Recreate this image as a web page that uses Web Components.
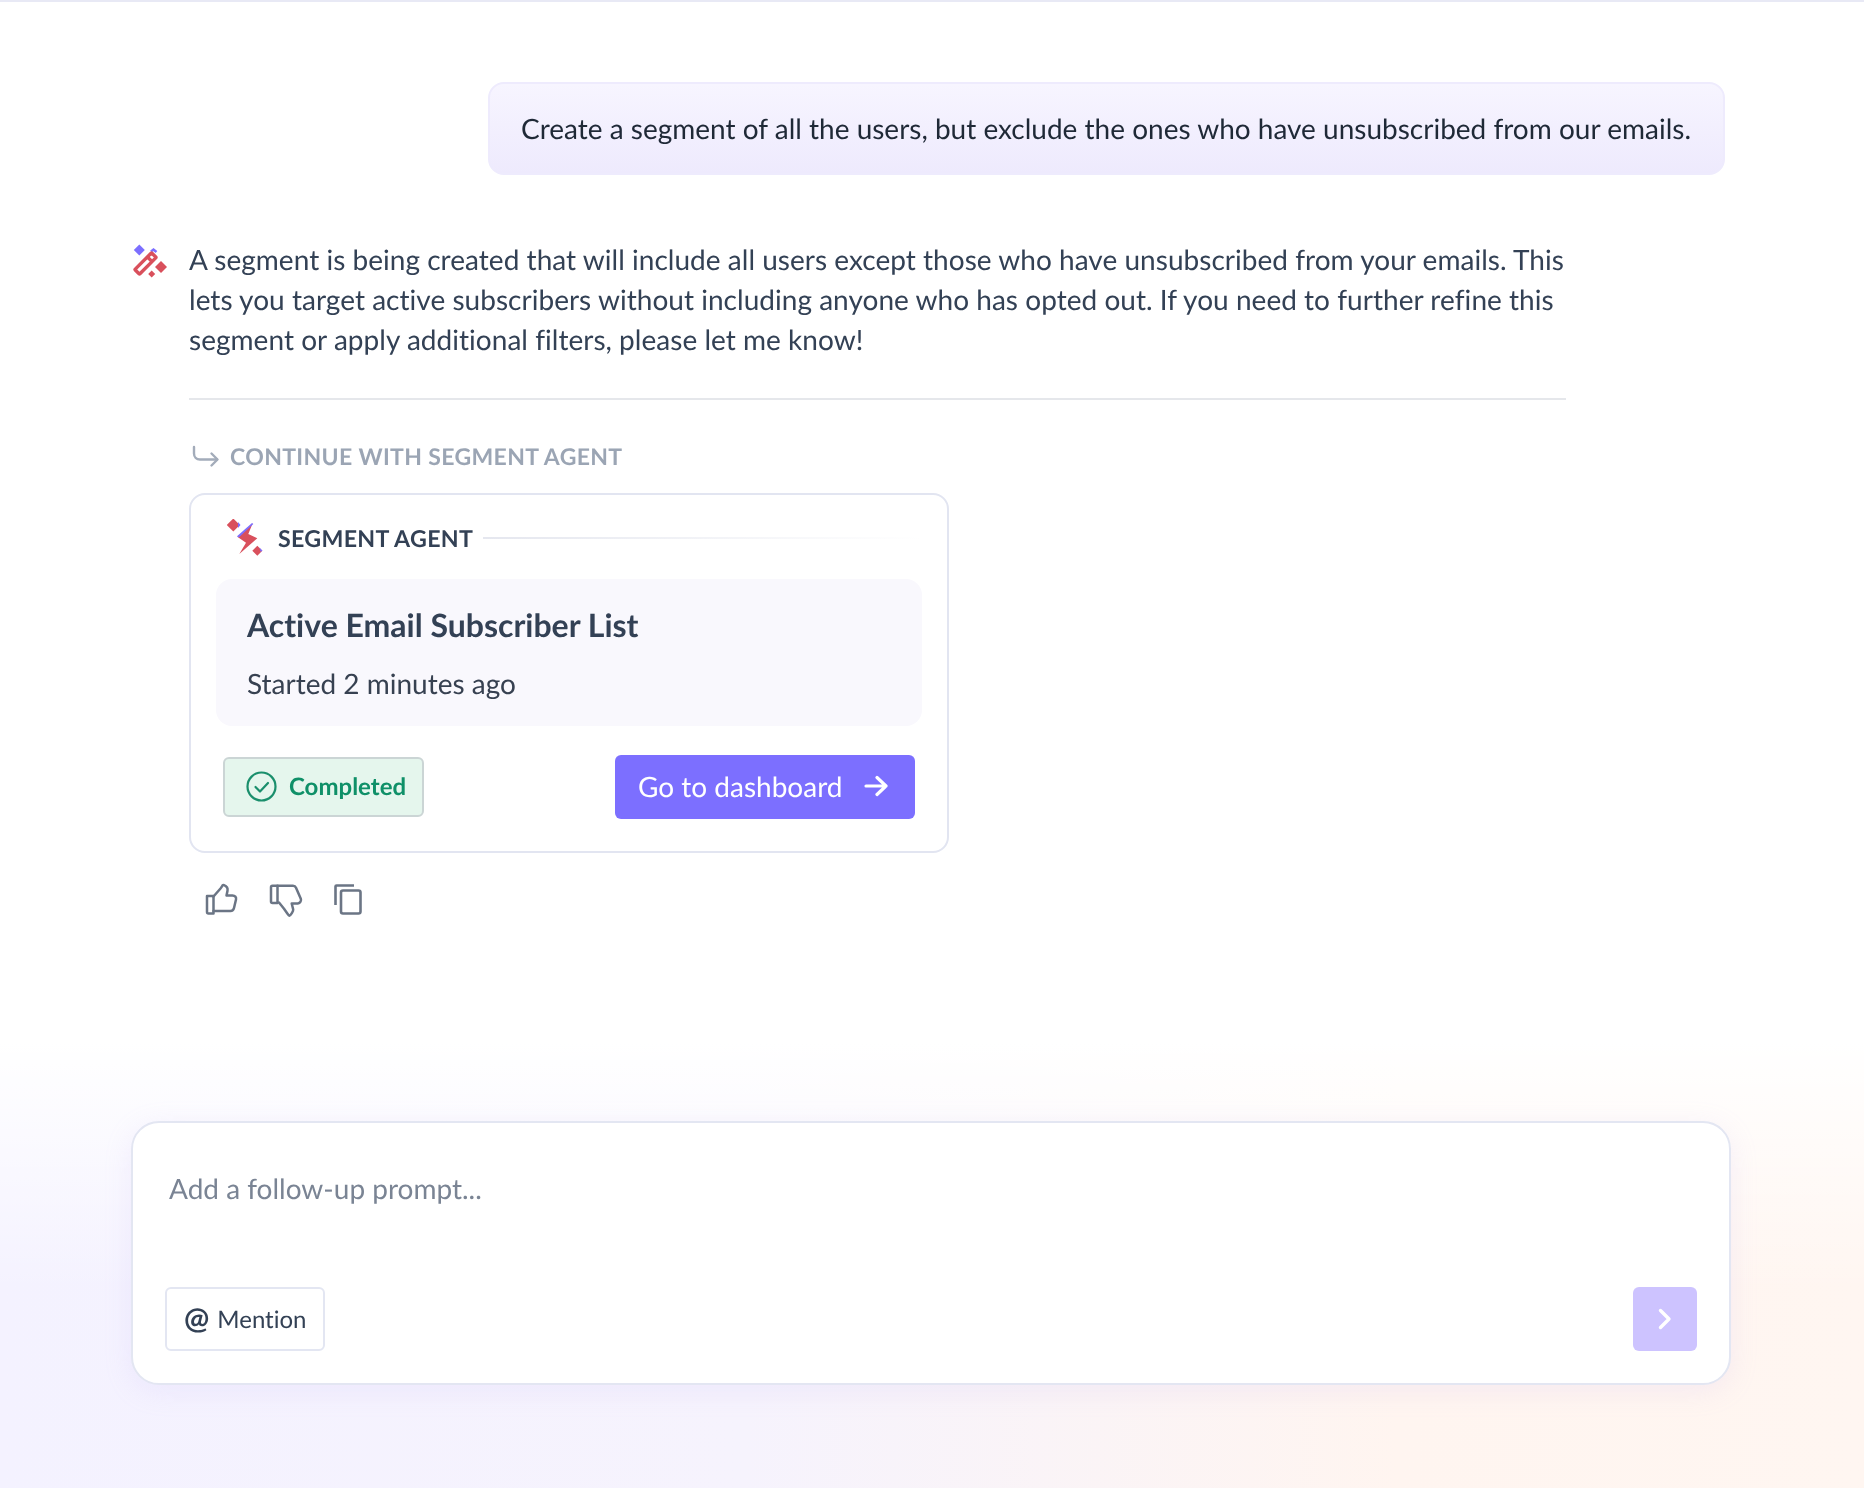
<!DOCTYPE html>
<html lang="en"><head><meta charset="utf-8"><title>Chat</title>
<style>html,body{margin:0;padding:0}body{font-family:Lato,sans-serif;background:#fff;text-rendering:geometricPrecision;font-variant-ligatures:none}.lig{font-variant-ligatures:normal}</style></head>
<body>
<chat-app>
  <user-bubble>Create a segment of all the users, but exclude the ones who have unsubscribed from our emails.</user-bubble>
  <assistant-msg>A segment is being created that will include all users except those who have unsubscribed from your emails. This<br>lets you target active subscribers without including anyone who has opted out. If you need to further re<span class="lig">fi</span>ne this<br>segment or apply additional <span class="lig">fi</span>lters, please let me know!
    <agent-card slot="extra" title-text="Active Email Subscriber List" sub="Started 2 minutes ago"></agent-card>
  </assistant-msg>
  <chat-composer slot="composer"></chat-composer>
</chat-app>
<script>
function def(name, html, init){
  customElements.define(name, class extends HTMLElement{
    constructor(){super();this.attachShadow({mode:'open'}).innerHTML=html;}
    connectedCallback(){ if(init) init.call(this); }
  });
}
def('chat-app',`<style>
:host{display:flex;flex-direction:column;box-sizing:border-box;width:1864px;height:1488px;overflow:hidden;
 border-top:2px solid #e8e9f5;
 background:linear-gradient(to bottom,#fff 0,#fff 1040px,rgba(255,255,255,0) 1290px),linear-gradient(to right,#f4f2ff 0,#f6f3fd 40%,#fff5f0 75%,#fff6f1 100%);
 font-family:Lato,sans-serif}
.main{flex:1;display:flex;flex-direction:column;padding:80px 134px 0 132px;will-change:transform}
.foot{padding:0 133px 103px 131px;will-change:transform}
</style><div class="main"><slot></slot></div><div class="foot"><slot name="composer"></slot></div>`);
def('user-bubble',`<style>
:host{display:block;align-self:flex-end;margin-right:5px;box-sizing:border-box;padding:24px 32px 26px 31px;height:93px;border:2px solid #eeebfd;border-radius:16px;
 background:linear-gradient(to bottom,#f7f5ff,#eeeafd);color:#1f2937;font-size:28px;line-height:40px;white-space:nowrap}
</style><slot></slot>`);
def('assistant-msg',`<style>
:host{display:grid;grid-template-columns:57px 1377px;margin-top:64px;color:#334155}
.ic{padding-top:5px}
svg{display:block}
.t{font-size:28px;line-height:40px;color:#334155;letter-spacing:.03px;white-space:nowrap}
hr{border:0;height:2px;background:#e5e7eb;margin:39px 0 0}
.cont{display:flex;align-items:center;gap:10px;margin-top:36px;height:40px;padding-left:3px;color:#9ba5b4;font-size:23px;font-weight:700;letter-spacing:.35px}
.cards{margin-top:17px}
.acts{display:flex;gap:30px;margin-top:30px;padding-left:16px}
</style>
<div class="ic"><svg width="36" height="36" viewBox="0 0 36 36">
<path d="M7.300 0.500l5.500 5.500-5.500 5.500-5.500-5.500z" fill="#7c6fff"/>
<path d="M19 7.500l2.500-2 3 2.500" fill="none" stroke="#7c6fff" stroke-width="2.500"/>
<g transform="translate(13.500 19.500) rotate(-45)" fill="none" stroke="#d9505c" stroke-width="3.400" stroke-linejoin="round"><rect x="-11.800" y="-3.300" width="23.600" height="6.600" rx=".6"/><path d="M6 -3.300v6.600"/></g>
<path d="M29 17l6 6-6 6-6-6z" fill="#d9505c"/><path d="M19.700 26.500l3.500 3.500-3.500 3.500-3.500-3.500z" fill="#d9505c"/></svg></div>
<div><div class="t"><slot></slot></div><hr>
<div class="cont"><svg width="28" height="24" viewBox="0 0 28 24" fill="none" stroke="#a3acba" stroke-width="2.400" stroke-linecap="round" stroke-linejoin="round"><path d="M2 3v6.500c0 3.500 2.500 6 6 6h17"/><path d="M19.500 9.500l6 6-6 6"/></svg><span>CONTINUE WITH SEGMENT AGENT</span></div>
<div class="cards"><slot name="extra"></slot></div>
<div class="acts">
<svg width="34" height="34" viewBox="0 0 34 34" fill="none" stroke="#6b7585" stroke-width="2.500" stroke-linejoin="round" stroke-linecap="round"><path d="M2 13h6.500v17.500H3.500A1.500 1.500 0 0 1 2 29z"/><path d="M8.500 13.500l7-8c.8-1 1.500-2 2-3 .5-.5 1-.5 1.500-.3 2.500 1 4 3 3.500 5.500l-1 4.800h6c2.500 0 4 1.800 3.500 4l-2 8.500c-.5 2-1.800 3-3.500 3H8.500"/></svg>
<svg width="34" height="34" viewBox="0 0 34 34" fill="none" stroke="#6b7585" stroke-width="2.500" stroke-linejoin="round" stroke-linecap="round"><path d="M2 4.200a1.500 1.500 0 0 1 1.500-1.500H8.500V20H3.500A1.500 1.500 0 0 1 2 18.500z"/><path d="M8.500 2.700H24c1.500 0 2.500.8 3 2l4.800 11c.8 2-.5 4.500-3 4.800H22.700l1.500 6c.2 1.500-2.500 6-3.900 6.200-.8 0-1.200-1-1.800-2l-3.500-5-5-6.200"/></svg>
<svg width="30" height="34" viewBox="0 0 30 34" fill="none" stroke="#6b7585" stroke-width="2.600" stroke-linejoin="round"><path d="M2.500 22V3.500a1 1 0 0 1 1-1H21"/><rect x="8" y="7.500" width="19.500" height="23" rx="2"/></svg>
</div></div>`);
def('agent-card',`<style>
:host{display:block;box-sizing:border-box;width:760px;height:360px;border:2px solid #e2e5f1;border-radius:16px;background:#fff;padding:0 25px 0 25px;color:#334155}
.h{display:flex;align-items:center;height:84px;margin-left:11px;gap:15px;box-sizing:border-box;padding-top:2px}
.h b{font-size:23.200px;font-weight:700;letter-spacing:.3px;white-space:nowrap;color:#334155}
.ln{height:2px;flex:1;margin-left:-5px;background:linear-gradient(to right,#e5e7ef,rgba(229,231,239,0))}
.p{height:147px;box-sizing:border-box;background:#f9f8fd;border-radius:16px;padding:24px 31px}
.p h3{margin:0;font-size:32px;line-height:44px;font-weight:700;color:#334155}
.p div{font-size:28px;line-height:40px;margin-top:16px;color:#374151}
.r{display:flex;align-items:center;justify-content:space-between;margin:29px 7px 0 7px}
.btn{display:flex;align-items:center;gap:22px;box-sizing:border-box;width:300px;height:64px;padding:0 24px 2px 23px;background:#7c6fff;border-radius:6px;color:#fff;font-size:28px}
</style>
<div class="h"><svg width="36" height="38" viewBox="0 0 36 38"><path d="M6.300 -.5L12.800 6l-6.500 6.500L-.2 6z" fill="#d9505c"/><path d="M11 3l2.500 3-2.500 3z" fill="#7c6fff"/><path d="M25.700 4.300L10.300 17.700 19 23.700 12.300 35 30.300 19.300 21.300 15z" fill="#d9505c"/><path d="M10 17.300L25 4l1.300 1L11.800 18.400z" fill="#7c6fff"/><path d="M30.300 26.700l5 5-5 5-5-5z" fill="#d9505c"/><path d="M32.500 28.500l3 3.200-2 1z" fill="#7c6fff"/></svg><b>SEGMENT AGENT</b><div class="ln"></div></div>
<div class="p"><h3 id="t"></h3><div id="s"></div></div>
<div class="r"><status-badge>Completed</status-badge><div class="btn"><span>Go to dashboard</span><svg width="24" height="22" viewBox="0 0 24 22" fill="none" stroke="#fff" stroke-width="3.200" stroke-linecap="round" stroke-linejoin="round"><path d="M2 11h20M13 2.500l9 8.500-9 8.500"/></svg></div></div>`,
function(){this.shadowRoot.getElementById('t').textContent=this.getAttribute('title-text');this.shadowRoot.getElementById('s').textContent=this.getAttribute('sub');});
def('status-badge',`<style>
:host{display:flex;align-items:center;gap:12px;box-sizing:border-box;width:201px;height:60px;padding:0 0 2px 21px;background:#e5f6ed;border:2px solid #cbd5d5;border-radius:6px;color:#0f9068;font-size:24px;font-weight:700}
</style><svg width="31" height="31" viewBox="0 0 31 31" fill="none" stroke="#1a8f6c" stroke-width="2.200" stroke-linecap="round" stroke-linejoin="round"><circle cx="15.500" cy="15.500" r="14"/><path d="M9.500 16l4.500 4.500 8-8.500"/></svg><slot></slot>`);
def('chat-composer',`<style>
:host{display:flex;flex-direction:column;justify-content:space-between;box-sizing:border-box;height:264px;border:2px solid #e3e6f2;border-radius:28px;background:#fff;padding:46px 32px 32px 36px;box-shadow:0 6px 28px rgba(190,175,245,.16);color:#334155}
.ph{font-size:28px;line-height:38px;color:#7a8494}
.r{display:flex;justify-content:space-between;margin-left:-4px}
.m{display:flex;align-items:center;gap:8px;box-sizing:border-box;width:160px;height:64px;padding-left:17px;border:2px solid #e3e6f2;border-radius:6px;font-size:24px;background:#fff}
.m i{font-style:normal;font-size:30px;font-weight:700;line-height:1;position:relative;top:-1px}
.s{display:flex;align-items:center;justify-content:center;width:64px;height:64px;border-radius:6px;background:#cdc3ff}
</style><div class="ph">Add a follow-up prompt...</div>
<div class="r"><div class="m"><i>@</i><span>Mention</span></div><div class="s"><svg width="14" height="22" viewBox="0 0 14 22" fill="none" stroke="#fff" stroke-width="3.400" stroke-linecap="round" stroke-linejoin="round"><path d="M2.500 2.500l8.500 8.500-8.500 8.500"/></svg></div></div>`);
</script>
</body></html>
